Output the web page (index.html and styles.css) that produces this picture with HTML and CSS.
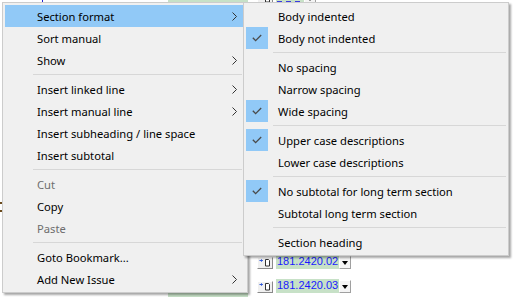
FILE: index.html
```html
<!DOCTYPE html>
<html>
<head lang="en">
    <meta charset="UTF-8">
    <title>Section format menu</title>
    <link rel="stylesheet" href="styles.css">
</head>
<body>
<div id="sheet">
    <div class="rows">
        <div class="row"><div class="lead"><i class="tick"></i></div><div class="cell"></div><div class="field"><span class="btn"><svg width="12" height="9" viewBox="0 0 12 9"><path d="M0.5 2.5h3l-1.2-1.2M3.5 2.5l-1.2 1.2" fill="none" stroke="#2b55d8" stroke-width="1"/><path d="M6.5 1.5h3l1 1v5.5h-4z" fill="#fff" stroke="#333" stroke-width="1"/></svg></span><span class="val stub"><i></i><i></i><i></i></span><span class="drop"></span></div></div>
        <div class="row"><div class="lead"></div><div class="cell"></div><div class="field"></div></div>
        <div class="row"><div class="lead"></div><div class="cell"></div><div class="field"></div></div>
        <div class="row"><div class="lead"></div><div class="cell"></div><div class="field"></div></div>
        <div class="row"><div class="lead"></div><div class="cell"></div><div class="field"></div></div>
        <div class="row"><div class="lead"></div><div class="cell"></div><div class="field"></div></div>
        <div class="row"><div class="lead"></div><div class="cell"></div><div class="field"></div></div>
        <div class="row"><div class="lead"></div><div class="cell"></div><div class="field"></div></div>
        <div class="row"><div class="lead"><i class="colon"></i></div><div class="cell"></div><div class="field"></div></div>
        <div class="row"><div class="lead"></div><div class="cell"></div><div class="field"></div></div>
        <div class="row"><div class="lead"></div><div class="cell"></div><div class="field"></div></div>
        <div class="row"><div class="lead"></div><div class="cell"></div><div class="field"><span class="btn"><svg width="12" height="9" viewBox="0 0 12 9"><path d="M0.5 2.5h3l-1.2-1.2M3.5 2.5l-1.2 1.2" fill="none" stroke="#2b55d8" stroke-width="1"/><path d="M6.5 1.5h3l1 1v5.5h-4z" fill="#fff" stroke="#333" stroke-width="1"/></svg></span><span class="val">181.2420.02</span><span class="drop"></span></div></div>
        <div class="row"><div class="lead"></div><div class="cell"></div><div class="field"><span class="btn"><svg width="12" height="9" viewBox="0 0 12 9"><path d="M0.5 2.5h3l-1.2-1.2M3.5 2.5l-1.2 1.2" fill="none" stroke="#2b55d8" stroke-width="1"/><path d="M6.5 1.5h3l1 1v5.5h-4z" fill="#fff" stroke="#333" stroke-width="1"/></svg></span><span class="val">181.2420.03</span><span class="drop"></span></div></div>
    </div>

    <div class="menu main">
        <div class="item hl"><span class="chk"></span><span class="label">Section format</span><svg class="arrow" width="5" height="9" viewBox="0 0 5 9"><path d="M0.5 0.5l4 4-4 4" fill="none" stroke="#333" stroke-width="1"/></svg></div>
        <div class="item"><span class="chk"></span><span class="label">Sort manual</span></div>
        <div class="item"><span class="chk"></span><span class="label">Show</span><svg class="arrow" width="5" height="9" viewBox="0 0 5 9"><path d="M0.5 0.5l4 4-4 4" fill="none" stroke="#333" stroke-width="1"/></svg></div>
        <div class="sep"></div>
        <div class="item"><span class="chk"></span><span class="label">Insert linked line</span><svg class="arrow" width="5" height="9" viewBox="0 0 5 9"><path d="M0.5 0.5l4 4-4 4" fill="none" stroke="#333" stroke-width="1"/></svg></div>
        <div class="item"><span class="chk"></span><span class="label">Insert manual line</span><svg class="arrow" width="5" height="9" viewBox="0 0 5 9"><path d="M0.5 0.5l4 4-4 4" fill="none" stroke="#333" stroke-width="1"/></svg></div>
        <div class="item"><span class="chk"></span><span class="label">Insert subheading / line space</span></div>
        <div class="item"><span class="chk"></span><span class="label">Insert subtotal</span></div>
        <div class="sep"></div>
        <div class="item off"><span class="chk"></span><span class="label">Cut</span></div>
        <div class="item"><span class="chk"></span><span class="label">Copy</span></div>
        <div class="item off"><span class="chk"></span><span class="label">Paste</span></div>
        <div class="sep"></div>
        <div class="item"><span class="chk"></span><span class="label">Goto Bookmark...</span></div>
        <div class="item"><span class="chk"></span><span class="label">Add New Issue</span><svg class="arrow" width="5" height="9" viewBox="0 0 5 9"><path d="M0.5 0.5l4 4-4 4" fill="none" stroke="#333" stroke-width="1"/></svg></div>
    </div>

    <div class="menu sub">
        <div class="item"><span class="chk"></span><span class="label">Body indented</span></div>
        <div class="item"><span class="chk on"><svg width="10" height="8" viewBox="0 0 10 8"><path d="M0.8 3.8l2.8 2.8 5.6-5.6" fill="none" stroke="#4a4a4a" stroke-width="1.3"/></svg></span><span class="label">Body not indented</span></div>
        <div class="sep"></div>
        <div class="item"><span class="chk"></span><span class="label">No spacing</span></div>
        <div class="item"><span class="chk"></span><span class="label">Narrow spacing</span></div>
        <div class="item"><span class="chk on"><svg width="10" height="8" viewBox="0 0 10 8"><path d="M0.8 3.8l2.8 2.8 5.6-5.6" fill="none" stroke="#4a4a4a" stroke-width="1.3"/></svg></span><span class="label">Wide spacing</span></div>
        <div class="sep"></div>
        <div class="item"><span class="chk on"><svg width="10" height="8" viewBox="0 0 10 8"><path d="M0.8 3.8l2.8 2.8 5.6-5.6" fill="none" stroke="#4a4a4a" stroke-width="1.3"/></svg></span><span class="label">Upper case descriptions</span></div>
        <div class="item"><span class="chk"></span><span class="label">Lower case descriptions</span></div>
        <div class="sep"></div>
        <div class="item"><span class="chk on"><svg width="10" height="8" viewBox="0 0 10 8"><path d="M0.8 3.8l2.8 2.8 5.6-5.6" fill="none" stroke="#4a4a4a" stroke-width="1.3"/></svg></span><span class="label">No subtotal for long term section</span></div>
        <div class="item"><span class="chk"></span><span class="label">Subtotal long term section</span></div>
        <div class="sep"></div>
        <div class="item"><span class="chk"></span><span class="label">Section heading</span></div>
    </div>
</div>
</body>
</html>
```

FILE: styles.css
```css
*{
    margin: 0;
    padding: 0;
    box-sizing: border-box;
}
html,body{
    width: 516px;
    height: 297px;
    overflow: hidden;
    background: #fff;
}
#sheet{
    position: relative;
    display: flow-root;
    width: 516px;
    height: 297px;
    overflow: hidden;
}
/* background sheet rows */
.rows{
    margin-top: -9px;
}
.row{
    display: flex;
    height: 24px;
}
.lead{
    width: 168px;
}
.tick{
    display: block;
    margin-left: 42px;
    width: 1px;
    height: 14px;
    background: #2020d0;
}
.colon{
    display: block;
    width: 2px;
    height: 2px;
    margin-top: 19px;
    background: #6b4a1c;
    box-shadow: 0 8px 0 #6b4a1c;
}
.cell{
    width: 80px;
    height: 24px;
    background: #c7e1c7;
}
.field{
    display: flex;
    align-items: center;
    height: 14px;
    margin-left: 9px;
}
.btn{
    display: flex;
    align-items: center;
    justify-content: center;
    width: 16px;
    height: 12px;
    margin-top: 1px;
    background: #f0f0f0;
    border: 1px solid;
    border-color: #fff #8a8a8a #8a8a8a #fff;
}
.val{
    margin-left: 3px;
    height: 14px;
    line-height: 14px;
    padding: 0 1px;
    background: #c7e1c7;
    color: #1a1aff;
    font: 11px "Liberation Sans", Arial, sans-serif;
}
.val.stub{
    display: flex;
    align-items: flex-end;
    gap: 4px;
    width: 28px;
    padding-bottom: 2px;
}
.val.stub i{
    display: block;
    width: 5px;
    height: 2px;
    background: #3a3ae0;
}
.drop{
    position: relative;
    width: 12px;
    height: 13px;
    background: #f4f4f4;
    border: 1px solid;
    border-color: #fff #a0a0a0 #a0a0a0 #fff;
}
.drop:after{
    content: "";
    position: absolute;
    left: 2px;
    top: 4px;
    border-top: 4px solid #000;
    border-left: 3.5px solid transparent;
    border-right: 3.5px solid transparent;
}
/* popup menus */
.menu{
    position: absolute;
    top: 2px;
    background: #f0f0f0;
    border: 1px solid #cccccc;
    padding: 2px;
    box-shadow: 2px 2px 2px rgba(0,0,0,0.35);
    font: 11.2px "Noto Sans", "Open Sans", sans-serif;
    color: #000;
}
.main{
    left: 2px;
    width: 246px;
}
.sub{
    left: 243px;
    width: 266px;
}
.item{
    display: flex;
    align-items: center;
    height: 22px;
    padding-right: 8px;
}
.item.hl{
    background: #91c9f7;
}
.item.off{
    color: #6d6d6d;
}
.chk{
    display: flex;
    align-items: center;
    justify-content: center;
    width: 22px;
    height: 22px;
}
.chk.on{
    background: #91c9f7;
}
.label{
    flex: 1;
    margin-left: 10px;
    white-space: nowrap;
}
.sep{
    height: 7px;
    margin: 0 3px 0 28px;
    padding-top: 3px;
}
.sep:after{
    content: "";
    display: block;
    height: 1px;
    background: #d7d7d7;
}
.sub .sep{
    margin: 0 0 0 27px;
}
```
